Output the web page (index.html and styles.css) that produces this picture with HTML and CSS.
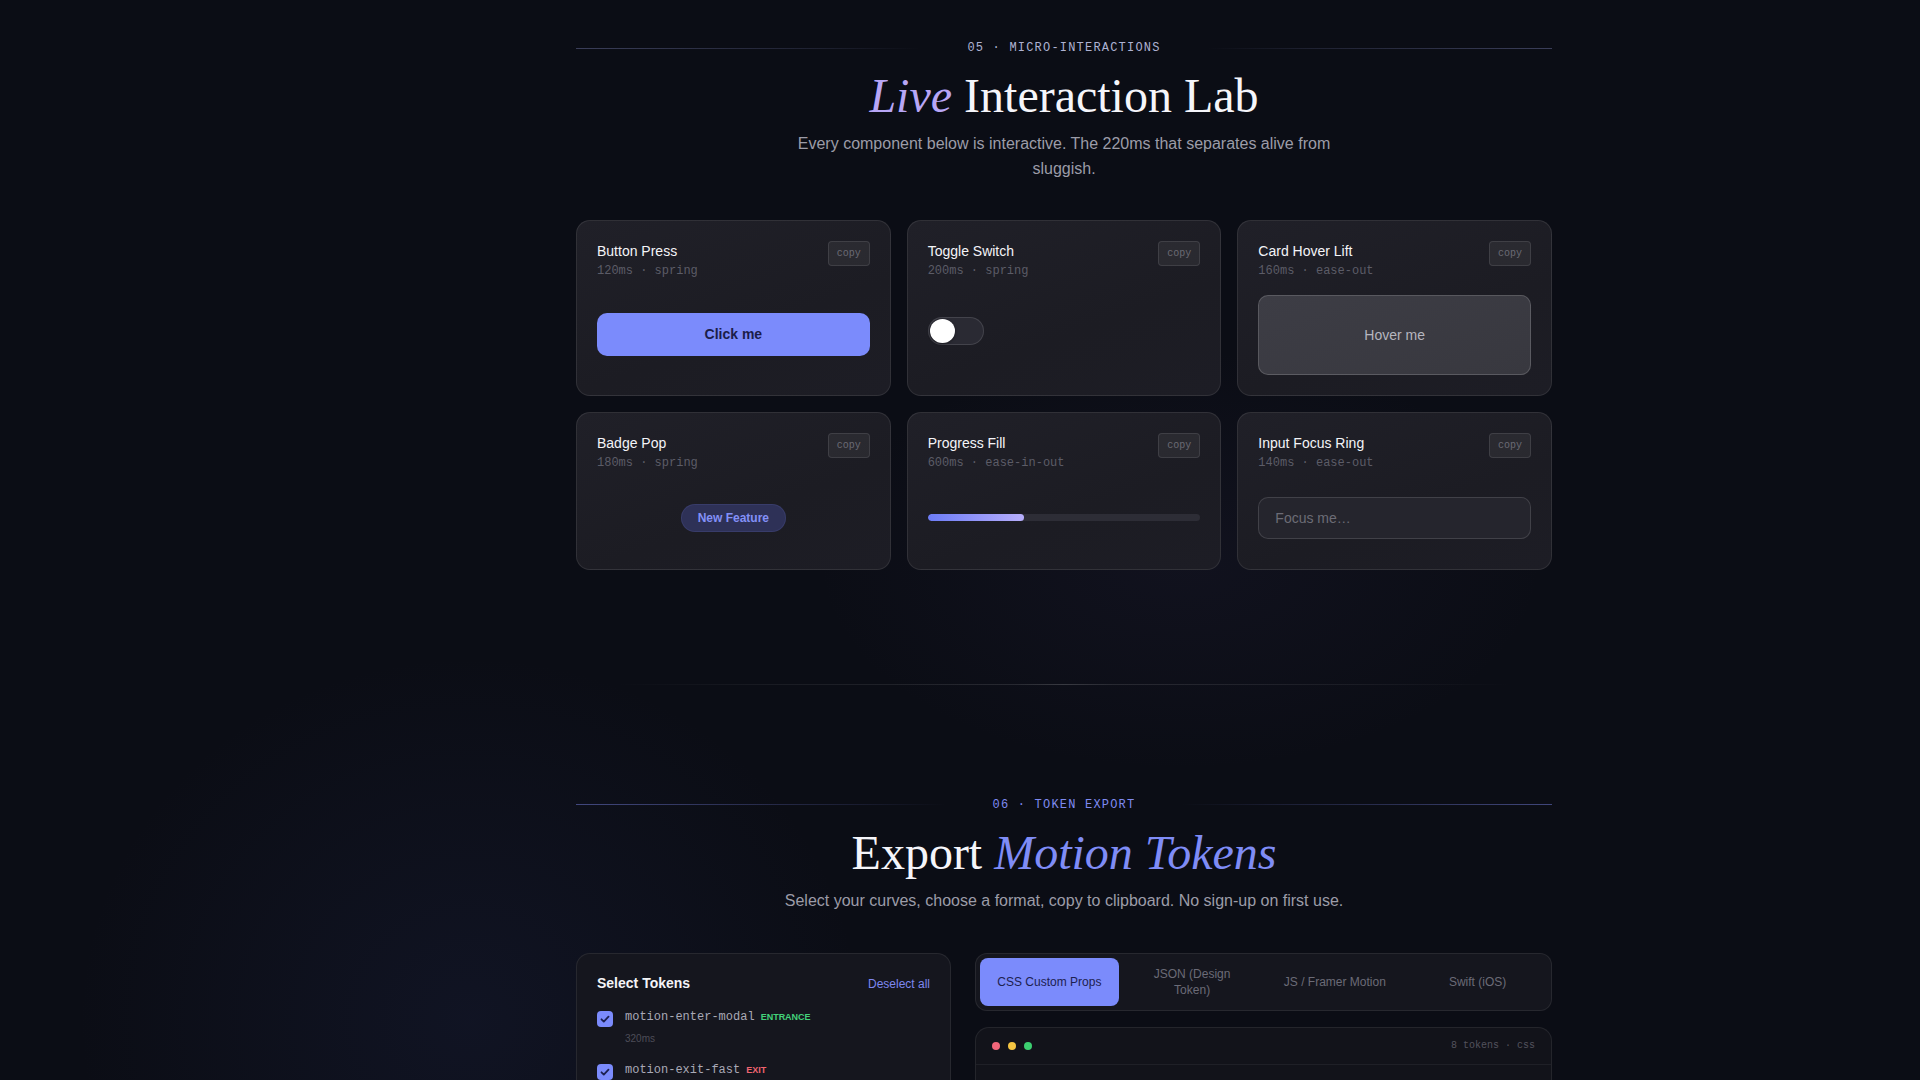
FILE: index.html
```html
<!DOCTYPE html>
<html lang="en">
<head>
<meta charset="utf-8">
<title>Live Interaction Lab</title>
<link rel="stylesheet" href="styles.css">
</head>
<body>
<main class="page">
  <section class="section section-lab">
    <div class="container">
      <div class="eyebrow eyebrow-muted">
        <span class="rule rule-left"></span>
        <span class="eyebrow-text">05 · MICRO-INTERACTIONS</span>
        <span class="rule rule-right"></span>
      </div>
      <h2 class="title"><em class="accent-lavender">Live</em> Interaction Lab</h2>
      <p class="lede">Every component below is interactive. The 220ms that separates alive from sluggish.</p>

      <div class="lab-grid">
        <article class="card">
          <header class="card-head">
            <div>
              <h3 class="card-title">Button Press</h3>
              <p class="card-meta">120ms · spring</p>
            </div>
            <button class="copy-btn" type="button">copy</button>
          </header>
          <div class="demo">
            <button class="press-btn" type="button">Click me</button>
          </div>
        </article>

        <article class="card">
          <header class="card-head">
            <div>
              <h3 class="card-title">Toggle Switch</h3>
              <p class="card-meta">200ms · spring</p>
            </div>
            <button class="copy-btn" type="button">copy</button>
          </header>
          <div class="demo demo-start">
            <span class="toggle"><span class="toggle-knob"></span></span>
          </div>
        </article>

        <article class="card">
          <header class="card-head">
            <div>
              <h3 class="card-title">Card Hover Lift</h3>
              <p class="card-meta">160ms · ease-out</p>
            </div>
            <button class="copy-btn" type="button">copy</button>
          </header>
          <div class="demo">
            <div class="hover-box">Hover me</div>
          </div>
        </article>

        <article class="card">
          <header class="card-head">
            <div>
              <h3 class="card-title">Badge Pop</h3>
              <p class="card-meta">180ms · spring</p>
            </div>
            <button class="copy-btn" type="button">copy</button>
          </header>
          <div class="demo">
            <span class="badge">New Feature</span>
          </div>
        </article>

        <article class="card">
          <header class="card-head">
            <div>
              <h3 class="card-title">Progress Fill</h3>
              <p class="card-meta">600ms · ease-in-out</p>
            </div>
            <button class="copy-btn" type="button">copy</button>
          </header>
          <div class="demo">
            <div class="progress"><div class="progress-fill" style="width: 35.5%"></div></div>
          </div>
        </article>

        <article class="card">
          <header class="card-head">
            <div>
              <h3 class="card-title">Input Focus Ring</h3>
              <p class="card-meta">140ms · ease-out</p>
            </div>
            <button class="copy-btn" type="button">copy</button>
          </header>
          <div class="demo">
            <input class="focus-input" type="text" placeholder="Focus me…">
          </div>
        </article>
      </div>
    </div>
  </section>

  <div class="container"><div class="divider"></div></div>

  <section class="section section-export">
    <div class="container">
      <div class="eyebrow eyebrow-accent">
        <span class="rule rule-left"></span>
        <span class="eyebrow-text">06 · TOKEN EXPORT</span>
        <span class="rule rule-right"></span>
      </div>
      <h2 class="title">Export <em class="accent-indigo">Motion Tokens</em></h2>
      <p class="lede">Select your curves, choose a format, copy to clipboard. No sign-up on first use.</p>

      <div class="export-grid">
        <aside class="panel token-panel">
          <div class="token-head">
            <h3 class="token-title">Select Tokens</h3>
            <a class="deselect" href="#">Deselect all</a>
          </div>
          <ul class="token-list">
            <li class="token">
              <span class="check"><svg viewBox="0 0 16 16" width="16" height="16"><path d="M4.5 8.3l2.3 2.3 4.7-4.9" fill="none" stroke="#1c2050" stroke-width="1.8" stroke-linecap="round" stroke-linejoin="round"/></svg></span>
              <div class="token-info">
                <div class="token-line"><span class="token-name">motion-enter-modal</span><span class="tag tag-in">ENTRANCE</span></div>
                <div class="token-dur">320ms</div>
              </div>
            </li>
            <li class="token">
              <span class="check"><svg viewBox="0 0 16 16" width="16" height="16"><path d="M4.5 8.3l2.3 2.3 4.7-4.9" fill="none" stroke="#1c2050" stroke-width="1.8" stroke-linecap="round" stroke-linejoin="round"/></svg></span>
              <div class="token-info">
                <div class="token-line"><span class="token-name">motion-exit-fast</span><span class="tag tag-out">EXIT</span></div>
                <div class="token-dur">180ms</div>
              </div>
            </li>
            <li class="token">
              <span class="check"><svg viewBox="0 0 16 16" width="16" height="16"><path d="M4.5 8.3l2.3 2.3 4.7-4.9" fill="none" stroke="#1c2050" stroke-width="1.8" stroke-linecap="round" stroke-linejoin="round"/></svg></span>
              <div class="token-info">
                <div class="token-line"><span class="token-name">motion-button-press</span><span class="tag tag-fb">FEEDBACK</span></div>
                <div class="token-dur">120ms</div>
              </div>
            </li>
            <li class="token">
              <span class="check"><svg viewBox="0 0 16 16" width="16" height="16"><path d="M4.5 8.3l2.3 2.3 4.7-4.9" fill="none" stroke="#1c2050" stroke-width="1.8" stroke-linecap="round" stroke-linejoin="round"/></svg></span>
              <div class="token-info">
                <div class="token-line"><span class="token-name">motion-toggle</span><span class="tag tag-fb">FEEDBACK</span></div>
                <div class="token-dur">200ms</div>
              </div>
            </li>
          </ul>
        </aside>

        <div class="export-main">
          <div class="panel tabs">
            <button class="tab tab-active" type="button">CSS Custom Props</button>
            <button class="tab" type="button">JSON (Design Token)</button>
            <button class="tab" type="button">JS / Framer Motion</button>
            <button class="tab" type="button">Swift (iOS)</button>
          </div>
          <div class="panel code-panel">
            <div class="code-head">
              <div class="dots"><span class="dot dot-red"></span><span class="dot dot-yellow"></span><span class="dot dot-green"></span></div>
              <span class="code-info">8 tokens · css</span>
            </div>
            <pre class="code-body">:root {
  --motion-enter-modal: 320ms cubic-bezier(0.34, 1.56, 0.64, 1);
  --motion-exit-fast: 180ms cubic-bezier(0.4, 0, 1, 1);
  --motion-button-press: 120ms cubic-bezier(0.34, 1.56, 0.64, 1);
}</pre>
          </div>
        </div>
      </div>
    </div>
  </section>
</main>
</body>
</html>
```

FILE: styles.css
```css
* { box-sizing: border-box; }

html, body { margin: 0; padding: 0; }

body {
  background-color: #0b0d15;
  background-image:
    radial-gradient(520px 300px at 1180px 560px, rgba(70, 60, 110, 0.10), transparent 70%),
    radial-gradient(560px 520px at 470px 1020px, rgba(45, 55, 110, 0.16), transparent 70%);
  background-repeat: no-repeat;
  color: #f2f2f7;
  font-family: "Liberation Sans", Arial, sans-serif;
  min-height: 1400px;
}

.page { padding-left: 208px; }

.container {
  width: 976px;
  margin: 0 auto;
}

.section-lab { padding: 40px 0 114px; }
.section-export { padding: 112px 0 80px; }

/* eyebrow */
.eyebrow {
  display: flex;
  align-items: center;
  gap: 46px;
}
.rule { flex: 1; height: 1px; }
.rule-left { background: linear-gradient(90deg, rgba(150, 156, 220, 0.34), rgba(150, 156, 220, 0.14) 70%, rgba(150, 156, 220, 0)); }
.rule-right { background: linear-gradient(270deg, rgba(150, 156, 220, 0.34), rgba(150, 156, 220, 0.14) 70%, rgba(150, 156, 220, 0)); }
.eyebrow-accent .rule-left { background: linear-gradient(90deg, rgba(129, 140, 248, 0.45), rgba(129, 140, 248, 0.15) 70%, rgba(129, 140, 248, 0)); }
.eyebrow-accent .rule-right { background: linear-gradient(270deg, rgba(129, 140, 248, 0.45), rgba(129, 140, 248, 0.15) 70%, rgba(129, 140, 248, 0)); }

.eyebrow-text {
  font-family: "Liberation Mono", "DejaVu Sans Mono", monospace;
  font-size: 12px;
  line-height: 16px;
  letter-spacing: 1.2px;
  white-space: nowrap;
}
.eyebrow-muted .eyebrow-text { color: #aeb2d2; }
.eyebrow-accent .eyebrow-text { color: #7f8af0; }

.title {
  margin: 14px 0 0;
  text-align: center;
  font-family: "Liberation Serif", "Times New Roman", serif;
  font-weight: 400;
  font-size: 48px;
  line-height: 1.1;
  color: #f5f5fa;
}
.title em { font-style: italic; }
.accent-lavender { color: #b8a6f6; }
.accent-indigo { color: #7f8cf6; }

.lede {
  max-width: 560px;
  margin: 8px auto 0;
  text-align: center;
  font-size: 16px;
  line-height: 25.6px;
  color: #9c9ca8;
}

/* lab grid */
.lab-grid {
  margin-top: 38px;
  display: grid;
  grid-template-columns: repeat(3, 1fr);
  gap: 16px;
}

.card {
  display: flex;
  flex-direction: column;
  gap: 16px;
  padding: 20px;
  border-radius: 14px;
  border: 1px solid rgba(255, 255, 255, 0.09);
  background: linear-gradient(160deg, #202028 0%, #1c1c23 60%, #1d1d25 100%);
}

.card-head {
  display: flex;
  justify-content: space-between;
  align-items: flex-start;
}

.card-title {
  margin: 0;
  font-size: 14px;
  line-height: 20px;
  font-weight: 400;
  color: #f4f4f8;
}

.card-meta {
  margin: 2px 0 0;
  font-family: "Liberation Mono", "DejaVu Sans Mono", monospace;
  font-size: 12px;
  line-height: 16px;
  color: #5c5c67;
}

.copy-btn {
  font-family: "Liberation Mono", "DejaVu Sans Mono", monospace;
  font-size: 10px;
  line-height: 11px;
  padding: 6px 8px;
  border-radius: 4px;
  border: 1px solid rgba(255, 255, 255, 0.1);
  background: rgba(255, 255, 255, 0.06);
  color: #6b6b75;
}

.demo {
  flex: 1;
  min-height: 62px;
  display: flex;
  align-items: center;
  justify-content: center;
}
.demo-start { justify-content: flex-start; }

.press-btn {
  width: 100%;
  padding: 13px 16px;
  border: 0;
  border-radius: 10px;
  background: #7b8bfc;
  color: #1b1d4a;
  font-family: "Liberation Sans", Arial, sans-serif;
  font-weight: 700;
  font-size: 14px;
  line-height: 17px;
}

.toggle {
  position: relative;
  display: block;
  width: 56px;
  height: 28px;
  margin-bottom: 7px;
  border-radius: 14px;
  border: 1px solid rgba(255, 255, 255, 0.12);
  background: #2a2a33;
}
.toggle-knob {
  position: absolute;
  left: 1px;
  top: 1px;
  width: 25px;
  height: 24px;
  border-radius: 50%;
  background: #ffffff;
  box-shadow: 0 1px 3px rgba(0, 0, 0, 0.4);
}

.hover-box {
  width: 100%;
  height: 80px;
  display: flex;
  align-items: center;
  justify-content: center;
  border-radius: 10px;
  border: 1px solid rgba(255, 255, 255, 0.16);
  background: linear-gradient(160deg, #3d3d45, #38383f);
  color: #b6b6bf;
  font-size: 14px;
}

.badge {
  display: inline-block;
  padding: 7px 16px;
  border-radius: 999px;
  background: #2e3157;
  border: 1px solid rgba(129, 140, 248, 0.12);
  color: #8390f7;
  font-weight: 700;
  font-size: 12px;
  line-height: 12px;
}

.progress {
  width: 100%;
  height: 7px;
  border-radius: 4px;
  background: #2d2d36;
  overflow: hidden;
}
.progress-fill {
  height: 100%;
  border-radius: 4px;
  background: linear-gradient(90deg, #6c7cf6, #b7aefb);
}

.focus-input {
  width: 100%;
  height: 42px;
  padding: 0 16px;
  border-radius: 10px;
  border: 1px solid rgba(255, 255, 255, 0.13);
  background: #25252d;
  color: #e6e6ee;
  font-family: "Liberation Sans", Arial, sans-serif;
  font-size: 14px;
  outline: none;
}
.focus-input::placeholder { color: #6c6c76; }

/* divider */
.divider {
  height: 1px;
  background:
    linear-gradient(90deg, rgba(255, 255, 255, 0) 4%, rgba(255, 255, 255, 0.06) 20%, rgba(255, 255, 255, 0.11) 45%, rgba(255, 255, 255, 0.18) 50%, rgba(255, 255, 255, 0.11) 55%, rgba(255, 255, 255, 0.06) 80%, rgba(255, 255, 255, 0) 96%);
}

/* export */
.export-grid {
  margin-top: 40px;
  display: grid;
  grid-template-columns: 375px 1fr;
  gap: 24px;
  align-items: start;
}

.panel {
  border: 1px solid rgba(255, 255, 255, 0.08);
  background: #15161e;
  border-radius: 14px;
}

.token-panel { padding: 21px 20px 20px; }

.token-head {
  display: flex;
  justify-content: space-between;
  align-items: center;
  margin-bottom: 17px;
}
.token-title {
  margin: 0;
  font-size: 14px;
  line-height: 17px;
  font-weight: 700;
  color: #f4f4f8;
}
.deselect {
  font-size: 12px;
  color: #7d87f0;
  text-decoration: none;
}

.token-list {
  list-style: none;
  margin: 0;
  padding: 0;
  display: flex;
  flex-direction: column;
  gap: 16px;
}
.token {
  display: flex;
  align-items: flex-start;
  gap: 12px;
}
.check {
  flex: none;
  width: 16px;
  height: 16px;
  margin-top: 2px;
  border-radius: 4px;
  background: #7b8bfc;
  display: flex;
}
.token-line {
  display: flex;
  align-items: center;
  gap: 6px;
}
.token-name {
  font-family: "Liberation Mono", "DejaVu Sans Mono", monospace;
  font-size: 12px;
  line-height: 16px;
  color: #a9a9b6;
}
.tag {
  font-size: 9px;
  font-weight: 700;
  line-height: 12px;
}
.tag-in { color: #43d17a; }
.tag-out { color: #f0646f; }
.tag-fb { color: #f5b84a; }
.token-dur {
  margin-top: 7px;
  font-size: 10px;
  line-height: 14px;
  color: #4d4d58;
}

.export-main {
  display: flex;
  flex-direction: column;
  gap: 16px;
}

.tabs {
  display: grid;
  grid-template-columns: repeat(4, 1fr);
  gap: 4px;
  padding: 4px;
  border-radius: 12px;
}
.tab {
  padding: 8px 12px;
  border: 0;
  border-radius: 8px;
  background: transparent;
  color: #6b6b77;
  font-family: "Liberation Sans", Arial, sans-serif;
  font-size: 12px;
  line-height: 16px;
  text-align: center;
}
.tab-active {
  background: #7b8bfc;
  color: #1d2150;
}

.code-panel {
  background: #12131a;
  overflow: hidden;
}
.code-head {
  display: flex;
  justify-content: space-between;
  align-items: center;
  padding: 14px 16px;
  border-bottom: 1px solid rgba(255, 255, 255, 0.06);
}
.dots { display: flex; gap: 8px; }
.dot { width: 8px; height: 8px; border-radius: 50%; }
.dot-red { background: #f2667a; }
.dot-yellow { background: #f4c542; }
.dot-green { background: #3ccf70; }
.code-info {
  font-family: "Liberation Mono", "DejaVu Sans Mono", monospace;
  font-size: 10px;
  line-height: 8px;
  color: #52525d;
}
.code-body {
  margin: 0;
  padding: 16px;
  font-family: "Liberation Mono", "DejaVu Sans Mono", monospace;
  font-size: 12px;
  line-height: 20px;
  color: #b5b5c2;
}
```
